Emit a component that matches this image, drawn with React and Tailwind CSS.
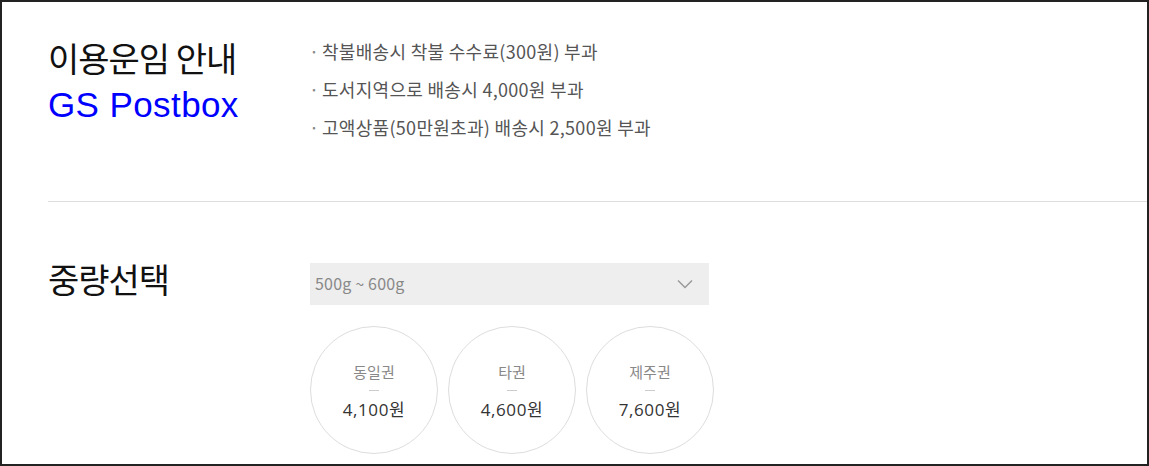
import React from 'react';

const notes = [
  '착불배송시 착불 수수료(300원) 부과',
  '도서지역으로 배송시 4,000원 부과',
  '고액상품(50만원초과) 배송시 2,500원 부과',
];

const zones = [
  { name: '동일권', price: '4,100원' },
  { name: '타권', price: '4,600원' },
  { name: '제주권', price: '7,600원' },
];

const kr = { fontFamily: '"Noto Sans CJK KR", "Noto Sans", sans-serif' };

export default function App() {
  return (
    <div className="w-[1149px] h-[466px] border-2 border-[#222] bg-white overflow-hidden" style={kr}>
      <div className="flex pl-[46px] pt-[32px] h-[199px]">
        <div className="w-[262px] shrink-0">
          <h2 className="text-[34px] leading-[48px] text-[#111] tracking-[-1px]">이용운임 안내</h2>
          <p className="text-[35px] leading-[40px] text-[#0000ff] tracking-[0.4px] mt-[3px]" style={{ fontFamily: '"Liberation Sans", Arial, sans-serif' }}>
            GS Postbox
          </p>
        </div>
        <ul className="mt-[-2px]">
          {notes.map((n) => (
            <li key={n} className="flex text-[18px] leading-[38px] text-[#555] tracking-[0.3px]">
              <span className="w-[12px] text-[#888] ml-[-1px] mr-[1px]">·</span>
              <span>{n}</span>
            </li>
          ))}
        </ul>
      </div>
      <div className="ml-[46px] border-t border-[#ddd]" />
      <div className="flex pl-[46px] pt-[61px]">
        <div className="w-[262px] shrink-0">
          <h2 className="text-[34px] leading-[36px] text-[#111] tracking-[-1px] mt-[-2px]">중량선택</h2>
        </div>
        <div>
          <div className="w-[399px] h-[42px] bg-[#eeeeee] flex items-center justify-between pl-[5px] pr-[16px]">
            <span className="text-[16px] text-[#888] tracking-[0.2px] mt-[-2px]">500g ~ 600g</span>
            <svg width="16" height="10" viewBox="0 0 16 10" fill="none">
              <path d="M1 1.5 L8 8.5 L15 1.5" stroke="#999" strokeWidth="1.5" />
            </svg>
          </div>
          <div className="flex gap-[10px] mt-[21px]">
            {zones.map((z) => (
              <div
                key={z.name}
                className="w-[128px] h-[128px] rounded-full border border-[#dddddd] flex flex-col items-center justify-center"
              >
                <span className="text-[15px] leading-[20px] text-[#888] mt-[2px]">{z.name}</span>
                <span className="w-[10px] h-px bg-[#ccc] my-[8px]" />
                <span className="text-[17px] leading-[22px] text-[#333] tracking-[0.6px]" style={{ fontFamily: '"Open Sans", "Noto Sans CJK KR", sans-serif' }}>
                  {z.price}
                </span>
              </div>
            ))}
          </div>
        </div>
      </div>
    </div>
  );
}
